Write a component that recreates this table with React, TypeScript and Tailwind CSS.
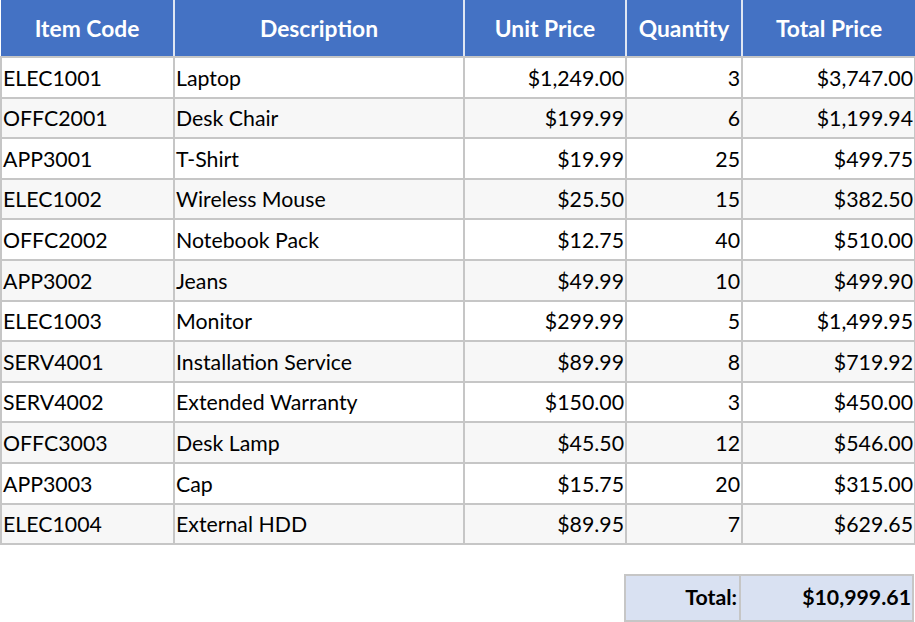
import React from 'react';

const rows: [string, string, string, string, string][] = [
  ['ELEC1001', 'Laptop', '$1,249.00', '3', '$3,747.00'],
  ['OFFC2001', 'Desk Chair', '$199.99', '6', '$1,199.94'],
  ['APP3001', 'T-Shirt', '$19.99', '25', '$499.75'],
  ['ELEC1002', 'Wireless Mouse', '$25.50', '15', '$382.50'],
  ['OFFC2002', 'Notebook Pack', '$12.75', '40', '$510.00'],
  ['APP3002', 'Jeans', '$49.99', '10', '$499.90'],
  ['ELEC1003', 'Monitor', '$299.99', '5', '$1,499.95'],
  ['SERV4001', 'Installation Service', '$89.99', '8', '$719.92'],
  ['SERV4002', 'Extended Warranty', '$150.00', '3', '$450.00'],
  ['OFFC3003', 'Desk Lamp', '$45.50', '12', '$546.00'],
  ['APP3003', 'Cap', '$15.75', '20', '$315.00'],
  ['ELEC1004', 'External HDD', '$89.95', '7', '$629.65'],
];

const headers = ['Item Code', 'Description', 'Unit Price', 'Quantity', 'Total Price'];

export default function App() {
  return (
    <div className="w-[915px] h-[622px] bg-white text-black text-[21.3px] font-['Lato',sans-serif] overflow-hidden">
      <table className="table-fixed border-collapse w-[914px]">
        <colgroup>
          <col className="w-[173px]" />
          <col className="w-[290px]" />
          <col className="w-[162px]" />
          <col className="w-[116px]" />
          <col className="w-[173px]" />
        </colgroup>
        <thead>
          <tr className="h-[57px] bg-[#4472c4] text-white text-[22.8px]">
            {headers.map((h, i) => (
              <th
                key={h}
                className={`font-bold text-center p-0 border-b-2 border-b-[#c6c6c6] ${
                  i > 0 ? 'border-l-2 border-l-[#dfe6f3]' : ''
                }`}
              >
                {h}
              </th>
            ))}
          </tr>
        </thead>
        <tbody>
          {rows.map((r, ri) => (
            <tr key={r[0]} className={`h-[40.6px] ${ri % 2 === 1 ? 'bg-[#f7f7f7]' : 'bg-white'}`}>
              {r.map((c, ci) => (
                <td
                  key={ci}
                  className={`border-2 border-[#c6c6c6] pt-[2px] pb-0 leading-none ${
                    ci < 2 ? 'text-left pl-[1px]' : 'text-right pr-[1px]'
                  }`}
                >
                  {c}
                </td>
              ))}
            </tr>
          ))}
        </tbody>
      </table>

      <div className="flex justify-end pr-[1px] mt-[29px]">
        <div className="flex h-[48px] border-2 border-[#c6c6c6] bg-[#d9e1f2] font-bold">
          <div className="w-[115px] flex items-center justify-end pr-[2px] border-r-2 border-[#c6c6c6]">Total:</div>
          <div className="w-[171px] flex items-center justify-end pr-[1px]">$10,999.61</div>
        </div>
      </div>
    </div>
  );
}
